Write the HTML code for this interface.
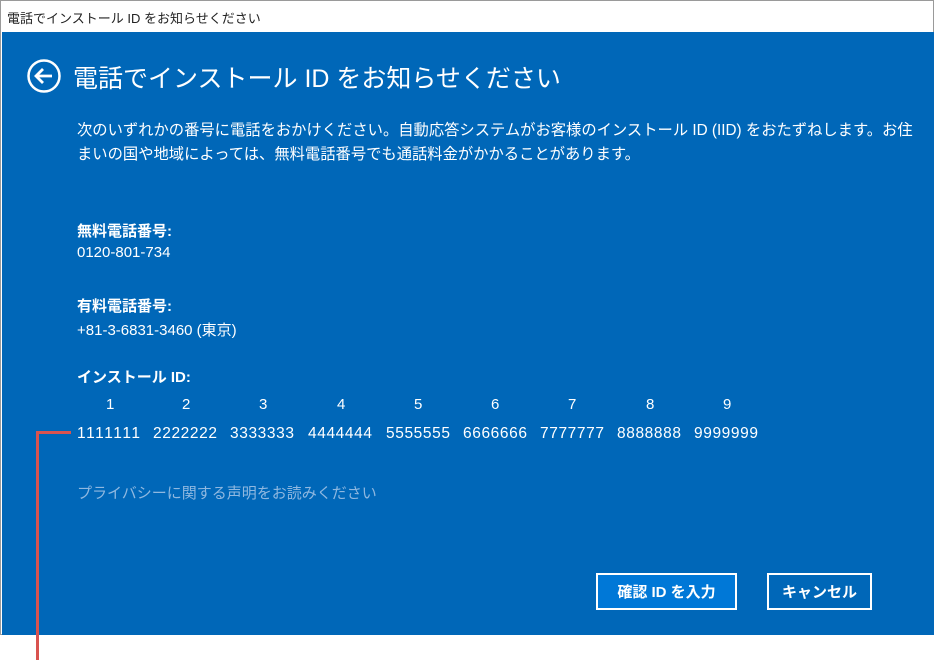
<!DOCTYPE html>
<html><head><meta charset="utf-8"><style>
*{margin:0;padding:0;box-sizing:border-box}
body{width:935px;height:660px;background:#fff;position:relative;overflow:hidden;font-family:"Liberation Sans","Noto Sans CJK JP",sans-serif;}
.win{position:absolute;left:0;top:0;width:934px;height:635px;border:1px solid #9a9a9a;background:#fff}
.title{position:absolute;left:6px;top:7px;font-size:13px;color:#222}
.blue{position:absolute;left:1px;top:31px;width:932px;height:603px;background:#0067b8}
.t{position:absolute;color:#fff;white-space:nowrap;font-size:15px}
.b{font-weight:bold}
.n{position:absolute;color:#fff;font-size:15.5px;top:425px;letter-spacing:0.6px}
.btn{position:absolute;border:2px solid #fff;color:#fff;font-weight:bold;font-size:15px;display:flex;align-items:center;justify-content:center}
.red{position:absolute;background:#d9534f}
</style></head><body>
<div class="win">
<div class="title">電話でインストール ID をお知らせください</div>
<div class="blue"></div>
</div>
<svg style="position:absolute;left:26px;top:58px" width="36" height="36" viewBox="0 0 36 36"><circle cx="18" cy="18" r="15.5" fill="none" stroke="#fff" stroke-width="2.5"/><path d="M26 18H10M17 11l-7 7 7 7" fill="none" stroke="#fff" stroke-width="2.8"/></svg>
<div class="t" style="left:73px;top:59px;font-size:25px">電話でインストール ID をお知らせください</div>
<div class="t" style="left:77px;top:118px;font-size:15.3px">次のいずれかの番号に電話をおかけください。自動応答システムがお客様のインストール ID (IID) をおたずねします。お住</div>
<div class="t" style="left:77px;top:142px;font-size:15.3px">まいの国や地域によっては、無料電話番号でも通話料金がかかることがあります。</div>
<div class="t b" style="left:77px;top:220px">無料電話番号:</div>
<div class="t" style="left:77px;top:244px">0120-801-734</div>
<div class="t b" style="left:77px;top:295px">有料電話番号:</div>
<div class="t" style="left:77px;top:319px">+81-3-6831-3460 (東京)</div>
<div class="t b" style="left:77px;top:366px">インストール ID:</div>
<div class="t" style="left:106px;top:396px">1</div>
<div class="t" style="left:182px;top:396px">2</div>
<div class="t" style="left:259px;top:396px">3</div>
<div class="t" style="left:337px;top:396px">4</div>
<div class="t" style="left:414px;top:396px">5</div>
<div class="t" style="left:491px;top:396px">6</div>
<div class="t" style="left:568px;top:396px">7</div>
<div class="t" style="left:646px;top:396px">8</div>
<div class="t" style="left:723px;top:396px">9</div>
<div class="n" style="left:77px;letter-spacing:1.6px">1111111</div>
<div class="n" style="left:153px">2222222</div>
<div class="n" style="left:230px">3333333</div>
<div class="n" style="left:308px">4444444</div>
<div class="n" style="left:386px">5555555</div>
<div class="n" style="left:463px">6666666</div>
<div class="n" style="left:540px">7777777</div>
<div class="n" style="left:617px">8888888</div>
<div class="n" style="left:694px">9999999</div>
<div class="t" style="left:77px;top:482px;color:#8fb8e0">プライバシーに関する声明をお読みください</div>
<div class="btn" style="left:596px;top:573px;width:141px;height:37px;background:#0078d7">確認 ID を入力</div>
<div class="btn" style="left:767px;top:573px;width:105px;height:37px">キャンセル</div>
<div class="red" style="left:36px;top:431px;width:35px;height:3px"></div>
<div class="red" style="left:36px;top:431px;width:3px;height:229px"></div>
</body></html>
